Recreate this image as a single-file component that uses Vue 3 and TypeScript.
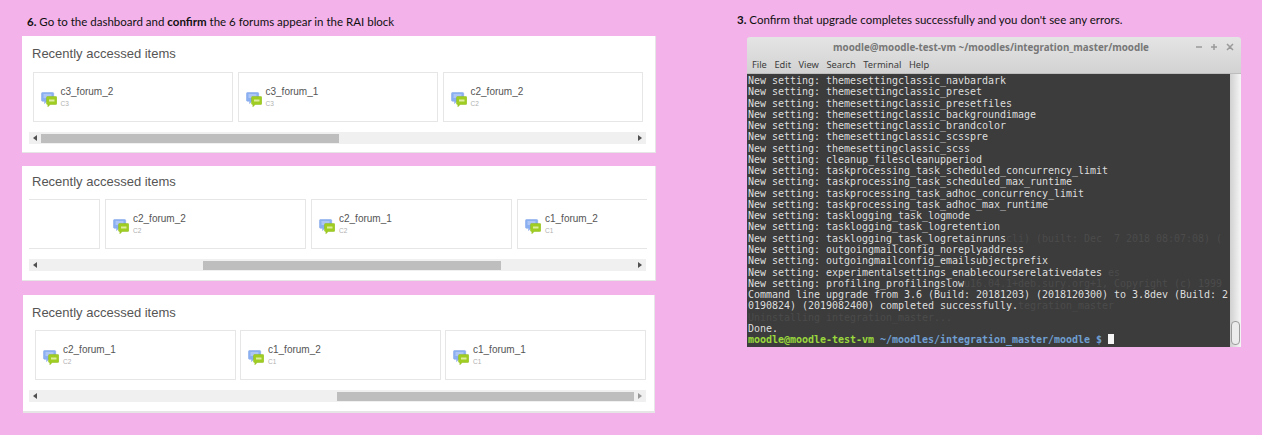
<script setup lang="ts">
interface Card { name: string; course: string }
interface Panel { cls: string; offset: number; thumbStart: number; thumbWidth: number; cards: Card[] }
interface Line { text: string; ghost?: string; col?: number }

const panels: Panel[] = [
  { cls: 'p1', offset: 3.5, thumbStart: 12, thumbWidth: 298, cards: [
    { name: 'c3_forum_2', course: 'C3' }, { name: 'c3_forum_1', course: 'C3' }, { name: 'c2_forum_2', course: 'C2' } ] },
  { cls: 'p2', offset: -130, thumbStart: 174, thumbWidth: 298, cards: [
    { name: '', course: '' }, { name: 'c2_forum_2', course: 'C2' }, { name: 'c2_forum_1', course: 'C2' }, { name: 'c1_forum_2', course: 'C1' } ] },
  { cls: 'p3', offset: 6, thumbStart: 308, thumbWidth: 297, cards: [
    { name: 'c2_forum_1', course: 'C2' }, { name: 'c1_forum_2', course: 'C1' }, { name: 'c1_forum_1', course: 'C1' } ] }
];

const s = 'New setting: ';
const lines: Line[] = [
  { text: s + 'themesettingclassic_navbardark' },
  { text: s + 'themesettingclassic_preset' },
  { text: s + 'themesettingclassic_presetfiles' },
  { text: s + 'themesettingclassic_backgroundimage' },
  { text: s + 'themesettingclassic_brandcolor' },
  { text: s + 'themesettingclassic_scsspre' },
  { text: s + 'themesettingclassic_scss' },
  { text: s + 'cleanup_filescleanupperiod' },
  { text: s + 'taskprocessing_task_scheduled_concurrency_limit' },
  { text: s + 'taskprocessing_task_scheduled_max_runtime' },
  { text: s + 'taskprocessing_task_adhoc_concurrency_limit' },
  { text: s + 'taskprocessing_task_adhoc_max_runtime' },
  { text: s + 'tasklogging_task_logmode' },
  { text: s + 'tasklogging_task_logretention' },
  { text: s + 'tasklogging_task_logretainruns', ghost: 'cli) (built: Dec  7 2018 08:07:08) (', col: 43 },
  { text: s + 'outgoingmailconfig_noreplyaddress' },
  { text: s + 'outgoingmailconfig_emailsubjectprefix' },
  { text: s + 'experimentalsettings_enablecourserelativedates', ghost: 'es', col: 60 },
  { text: s + 'profiling_profilingslow', ghost: 'u16.04.1+deb.sury.org+1, Copyright (c) 1999', col: 36 },
  { text: 'Command line upgrade from 3.6 (Build: 20181203) (2018120300) to 3.8dev (Build: 2' },
  { text: '0190824) (2019082400) completed successfully.', ghost: 'tegration_master', col: 45 },
  { text: '', ghost: 'Uninstalling integration_master...', col: 0 },
  { text: 'Done.' }
];

function pad(l: Line): string {
  return ' '.repeat(Math.max(0, (l.col ?? 0) - l.text.length));
}
</script>

<template>
  <div class="page">
    <section class="left">
      <p class="step step-left"><b>6.</b> Go to the dashboard and <b>confirm</b> the 6 forums appear in the RAI block</p>
      <div v-for="p in panels" :key="p.cls" class="panel" :class="p.cls">
        <h3 class="title">Recently accessed items</h3>
        <div class="viewport">
          <div class="cards" :style="{ marginLeft: p.offset + 'px' }">
            <div v-for="(c, i) in p.cards" :key="i" class="card">
              <template v-if="c.name">
                <svg class="forum" viewBox="0 0 16 16" width="16" height="16">
                  <path d="M1.5 1.5h10.2a1 1 0 0 1 1 1v6.8a1 1 0 0 1-1 1H5.6L3.6 12.6v-2.3H1.5a1 1 0 0 1-1-1V2.500a1 1 0 0 1 1-1z" fill="#8bb0f2" stroke="#7fa3e6" stroke-width=".5" />
                  <path d="M2.500 4h8M2.500 6h8" stroke="#cfdcf8" stroke-width="1" />
                  <path d="M6.500 5.500h8.300a1 1 0 0 1 1 1v6a1 1 0 0 1-1 1H9.200L6.900 15.800v-2.300h-.4a1 1 0 0 1-1-1v-6a1 1 0 0 1 1-1z" fill="#9fcd22" stroke="#8fbb1c" stroke-width=".5" />
                  <path d="M8 9.500h5.500" stroke="#dcedA0" stroke-width="2" />
                </svg>
                <div class="meta">
                  <div class="name">{{ c.name }}</div>
                  <div class="course">{{ c.course }}</div>
                </div>
              </template>
            </div>
          </div>
        </div>
        <div class="rail">
          <span class="arrow arrow-l"></span>
          <span class="thumb" :style="{ marginLeft: p.thumbStart + 'px', width: p.thumbWidth + 'px' }"></span>
          <span class="arrow arrow-r"></span>
        </div>
        <div v-if="p.cls === 'p3'" class="underline"></div>
      </div>
    </section>

    <section class="right">
      <p class="step step-right"><b>3.</b> Confirm that upgrade completes successfully and you don't see any errors.</p>
      <div class="term">
        <div class="chrome">
          <div class="titlebar">
            <span class="wintitle">moodle@moodle-test-vm ~/moodles/integration_master/moodle</span>
            <span class="winbtns">
              <svg viewBox="0 0 40 10" width="40" height="10">
                <path d="M1 5h6M19 2v6M16 5h6M32 2l6 6M38 2l-6 6" stroke="#9a9a9a" stroke-width="1.500" fill="none" />
              </svg>
            </span>
          </div>
          <div class="menu">
            <span>File</span><span>Edit</span><span>View</span><span>Search</span><span>Terminal</span><span>Help</span>
          </div>
        </div>
        <div class="termbody">
          <div class="screen">
            <div v-for="(l, i) in lines" :key="i" class="line">{{ l.text }}<span v-if="l.ghost" class="ghost">{{ pad(l) + l.ghost }}</span></div>
            <div class="line prompt"><span class="green">moodle@moodle-test-vm</span> <span class="blue">~/moodles/integration_master/moodle $</span> <span class="cursor"></span></div>
          </div>
          <div class="vbar"><span class="vthumb"></span></div>
        </div>
      </div>
    </section>
  </div>
</template>

<style>
body { margin: 0; background: #f3b3ea; }
</style>

<style scoped>
.page {
  width: 1262px;
  height: 435px;
  background: #f3b3ea;
  display: flex;
  overflow: hidden;
}
.left { width: 656px; padding-left: 22px; box-sizing: border-box; }
.right { margin-left: 81px; width: 510px; }

.step {
  margin: 0;
  color: #101010;
  font-family: Lato, "Open Sans", sans-serif;
  white-space: pre;
}
.step-left { font-size: 11.500px; line-height: 14px; padding: 15px 0 0 5px; height: 21px; }
.step-right { font-size: 11.500px; line-height: 14px; padding: 13px 0 0 0; height: 24px; }
.step b { font-weight: 700; }

.panel {
  background: #fff;
  box-sizing: border-box;
  border-right: 1px solid #e6e6e6;
  border-bottom: 1px solid #e6e6e6;
  overflow: hidden;
  width: 634px;
}
.p1 { height: 117px; padding-top: 9px; }
.p2 { height: 115px; padding-top: 7px; margin-top: 13px; }
.p3 { height: 118px; padding-top: 9px; margin-top: 14px; margin-left: 1px; width: 632px; }

.title {
  margin: 0 0 10px 10px;
  font: 400 13px/17px "Liberation Sans", Arial, sans-serif;
  color: #555;
}
.p2 .title, .p3 .title { margin-bottom: 9px; }
.p3 .title { margin-left: 9px; }

.viewport { margin-left: 7px; width: 618px; overflow: hidden; }
.p3 .viewport { margin-left: 6px; }
.cards { display: flex; gap: 4.500px; width: max-content; }
.p2 .cards { gap: 5.500px; }

.card {
  width: 200.500px;
  height: 50px;
  box-sizing: border-box;
  border: 1px solid #e6e6e6;
  display: flex;
  align-items: center;
  padding-left: 7px;
  gap: 4px;
  flex: none;
}
.forum { flex: none; margin-top: 3px; }
.name { font: 400 10px/12px "Liberation Sans", Arial, sans-serif; color: #555; }
.course { font: 400 6.500px/9px "Liberation Sans", Arial, sans-serif; color: #b0b0b0; margin-top: 1px; }

.rail {
  margin: 10px 0 0 7px;
  width: 617px;
  height: 12px;
  background: #f0f0f0;
  display: flex;
  align-items: center;
  box-sizing: border-box;
}
.p3 .rail { margin-left: 6px; }
.thumb { height: 9px; background: #bebebe; flex: none; }
.arrow { width: 0; height: 0; border-style: solid; flex: none; }
.arrow-l { border-width: 3px 4px 3px 0; border-color: transparent #505050 transparent transparent; margin-left: 4px; margin-right: -8px; }
.arrow-r { border-width: 3px 0 3px 4px; border-color: transparent transparent transparent #505050; margin-left: auto; margin-right: 4px; }
.p3 .arrow-r { border-left-color: #999; }
.underline { height: 1px; background: #e6e6e6; margin-top: 9px; }

.term {
  margin-left: 10px;
  width: 494px;
  height: 310px;
  box-sizing: border-box;
  border-radius: 3px 3px 0 0;
  overflow: hidden;
  display: flex;
  flex-direction: column;
  margin-top: 0;
}
.chrome {
  height: 37px;
  background: linear-gradient(#e4e4e4, #d2d2d2);
  border-bottom: 1px solid #bdbdbd;
  box-sizing: border-box;
  flex: none;
}
.titlebar { height: 20px; position: relative; display: flex; align-items: center; justify-content: center; padding-top: 1px; box-sizing: border-box; }
.wintitle { font: 700 9.800px/14px "Noto Sans", sans-serif; color: #777; margin-left: -6px; }
.winbtns { position: absolute; right: 6px; top: 5px; line-height: 0; }
.menu {
  height: 16px;
  display: flex;
  gap: 7.500px;
  padding-left: 5px;
  align-items: center;
  font: 400 9.300px/14px "Noto Sans", sans-serif;
  color: #3c3c3c;
}
.termbody { display: flex; flex: 1; min-height: 0; }
.screen {
  width: 483px;
  flex: none;
  background: #3c3c3c;
  padding: 1px 0 0 1px;
  box-sizing: border-box;
  overflow: hidden;
}
.line {
  font: 400 10px/11.270px "DejaVu Sans Mono", monospace;
  letter-spacing: -0.020px;
  color: #dedede;
  height: 11.270px;
  white-space: pre;
}
.ghost { color: #4b4b4b; }
.prompt { font-weight: 700; }
.green { color: #9ad83c; }
.blue { color: #709fd2; }
.cursor { display: inline-block; width: 6px; height: 10px; background: #f5f5f5; vertical-align: -1px; }
.vbar {
  flex: 1;
  background: linear-gradient(90deg, #d0d0d0, #f6f6f6);
  display: flex;
  align-items: flex-end;
  justify-content: center;
  padding-bottom: 2px;
  box-sizing: border-box;
}
.vthumb {
  width: 7px;
  height: 22px;
  border: 1px solid #9c9c9c;
  border-radius: 4px;
  background: #ececec;
}
</style>
